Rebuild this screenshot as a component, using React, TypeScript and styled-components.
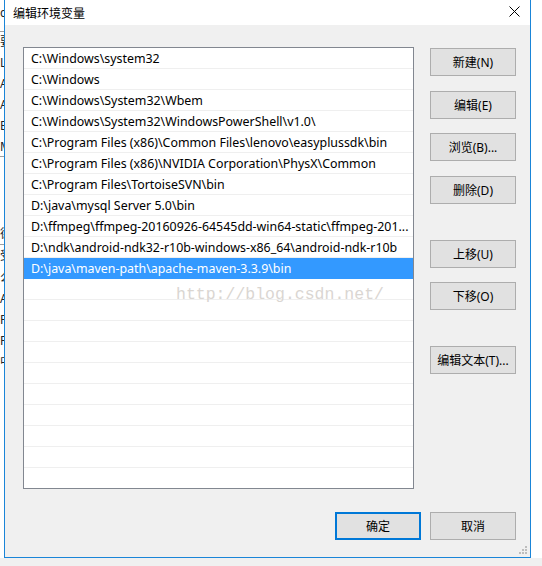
import React from "react";
import styled, { createGlobalStyle } from "styled-components";

const Global = createGlobalStyle`
  html, body { margin: 0; padding: 0; }
  body {
    background: #f0f0f0;
    font-family: "Noto Sans", "Noto Sans CJK SC", sans-serif;
    font-size: 12px;
    color: #000;
  }
`;

const Page = styled.div`
  width: 542px;
  height: 566px;
  background: #f0f0f0;
  overflow: hidden;
  display: flex;
  flex-direction: column;
`;

const Top = styled.div`
  display: flex;
  height: 558px;
`;

const BackStrip = styled.div`
  width: 4px;
  background: #fff;
  overflow: hidden;
  display: flex;
  flex-direction: column;
  padding-top: 4px;
`;

const BackLine = styled.div<{ $h: number; $rule?: boolean }>`
  height: ${(p) => p.$h}px;
  line-height: ${(p) => p.$h}px;
  white-space: nowrap;
  font-family: "Noto Sans", "Noto Sans CJK SC", sans-serif;
  font-size: 12px;
  color: #222;
  border-bottom: ${(p) => (p.$rule ? "1px solid #a0a0a0" : "none")};
  box-sizing: border-box;
`;

const RightStrip = styled.div`
  flex: 1;
  background: #fff;
`;

const Dialog = styled.div`
  position: relative;
  width: 527px;
  box-sizing: border-box;
  border: 1px solid #1a85d8;
  border-top: none;
  background: #f0f0f0;
  display: flex;
  flex-direction: column;
`;

const TitleBar = styled.div`
  height: 25px;
  background: #fff;
  display: flex;
  align-items: center;
  justify-content: space-between;
  padding: 0 10px 0 8px;
  font-family: "Noto Sans CJK SC", sans-serif;
  font-size: 12px;
  color: #000;
`;

const Title = styled.span`
  line-height: 25px;
  margin-top: -1px;
`;

const CloseIcon = styled.svg`
  width: 11px;
  height: 11px;
  margin-top: -2px;
`;

const Body = styled.div`
  display: flex;
  gap: 16px;
  padding: 22px 14px 0 18px;
`;

const ListBox = styled.div`
  position: relative;
  width: 391px;
  height: 442px;
  box-sizing: border-box;
  border: 1px solid #828790;
  background: #fff;
  overflow: hidden;
`;

const Row = styled.div<{ $selected?: boolean }>`
  height: 21px;
  box-sizing: border-box;
  border-bottom: 1px solid ${(p) => (p.$selected ? "#3399ff" : "#efefef")};
  background: ${(p) => (p.$selected ? "#3399ff" : "#fff")};
  color: ${(p) => (p.$selected ? "#fff" : "#000")};
  padding: 1px 4px 0 7px;
  line-height: 20px;
  white-space: nowrap;
  overflow: hidden;
  text-overflow: ellipsis;
  font-family: "Noto Sans", "Noto Sans CJK SC", sans-serif;
  font-size: 12.4px;
`;

const Watermark = styled.div`
  position: absolute;
  left: 152px;
  top: 237px;
  font-family: "Liberation Mono", monospace;
  font-size: 16.5px;
  color: #dad6d2;
  white-space: nowrap;
  pointer-events: none;
`;

const ButtonColumn = styled.div`
  display: flex;
  flex-direction: column;
  padding-top: 1px;
`;

const Button = styled.button<{ $mt?: number; $primary?: boolean }>`
  width: 86px;
  height: 28px;
  margin-top: ${(p) => p.$mt ?? 0}px;
  box-sizing: border-box;
  background: #e1e1e1;
  border: ${(p) => (p.$primary ? "2px solid #0078d7" : "1px solid #adadad")};
  padding: 0;
  font-family: "Noto Sans", "Noto Sans CJK SC", sans-serif;
  font-size: 12px;
  color: #000;
  display: flex;
  align-items: center;
  justify-content: center;
  cursor: default;
`;

const Footer = styled.div`
  display: flex;
  justify-content: flex-end;
  gap: 9px;
  padding: 23px 14px 0 0;
`;

const Grip = styled.svg`
  position: absolute;
  right: 2px;
  bottom: 2px;
  width: 10px;
  height: 10px;
`;

const paths = [
  "C:\\Windows\\system32",
  "C:\\Windows",
  "C:\\Windows\\System32\\Wbem",
  "C:\\Windows\\System32\\WindowsPowerShell\\v1.0\\",
  "C:\\Program Files (x86)\\Common Files\\lenovo\\easyplussdk\\bin",
  "C:\\Program Files (x86)\\NVIDIA Corporation\\PhysX\\Common",
  "C:\\Program Files\\TortoiseSVN\\bin",
  "D:\\java\\mysql Server 5.0\\bin",
  "D:\\ffmpeg\\ffmpeg-20160926-64545dd-win64-static\\ffmpeg-201...",
  "D:\\ndk\\android-ndk32-r10b-windows-x86_64\\android-ndk-r10b",
  "D:\\java\\maven-path\\apache-maven-3.3.9\\bin",
];

const backLines: { t: string; h: number; rule?: boolean }[] = [
  { t: "c", h: 18 },
  { t: "", h: 10, rule: true },
  { t: "要", h: 20 },
  { t: "L", h: 21 },
  { t: "A", h: 21 },
  { t: "A", h: 21 },
  { t: "E", h: 21 },
  { t: "M", h: 21, rule: true },
  { t: "", h: 66 },
  { t: "德", h: 22, rule: true },
  { t: "受", h: 22 },
  { t: "么", h: 21 },
  { t: "A", h: 21 },
  { t: "F", h: 21 },
  { t: "F", h: 21 },
  { t: "中", h: 21 },
];

export default function App() {
  const rows = Array.from({ length: 22 }, (_, i) => paths[i] ?? "");
  return (
    <>
      <Global />
      <Page>
        <Top>
          <BackStrip>
            {backLines.map((l, i) => (
              <BackLine key={i} $h={l.h} $rule={l.rule}>
                {l.t}
              </BackLine>
            ))}
          </BackStrip>
          <Dialog>
            <TitleBar>
              <Title>编辑环境变量</Title>
              <CloseIcon viewBox="0 0 11 11">
                <path d="M0.5 0.5 L10.5 10.5 M10.5 0.5 L0.5 10.5" stroke="#000" strokeWidth="1" fill="none" />
              </CloseIcon>
            </TitleBar>
            <Body>
              <ListBox>
                {rows.map((r, i) => (
                  <Row key={i} $selected={i === 10}>
                    {r || "\u00a0"}
                  </Row>
                ))}
                <Watermark>http://blog.csdn.net/</Watermark>
              </ListBox>
              <ButtonColumn>
                <Button>新建(N)</Button>
                <Button $mt={15}>编辑(E)</Button>
                <Button $mt={14}>浏览(B)...</Button>
                <Button $mt={15}>删除(D)</Button>
                <Button $mt={36}>上移(U)</Button>
                <Button $mt={14}>下移(O)</Button>
                <Button $mt={36}>编辑文本(T)...</Button>
              </ButtonColumn>
            </Body>
            <Footer>
              <Button $primary>确定</Button>
              <Button>取消</Button>
            </Footer>
            <Grip viewBox="0 0 10 10">
              <g fill="#bdbdbd">
                <rect x="7" y="1" width="2" height="2" />
                <rect x="4" y="4" width="2" height="2" />
                <rect x="7" y="4" width="2" height="2" />
                <rect x="1" y="7" width="2" height="2" />
                <rect x="4" y="7" width="2" height="2" />
                <rect x="7" y="7" width="2" height="2" />
              </g>
            </Grip>
          </Dialog>
          <RightStrip />
        </Top>
      </Page>
    </>
  );
}
